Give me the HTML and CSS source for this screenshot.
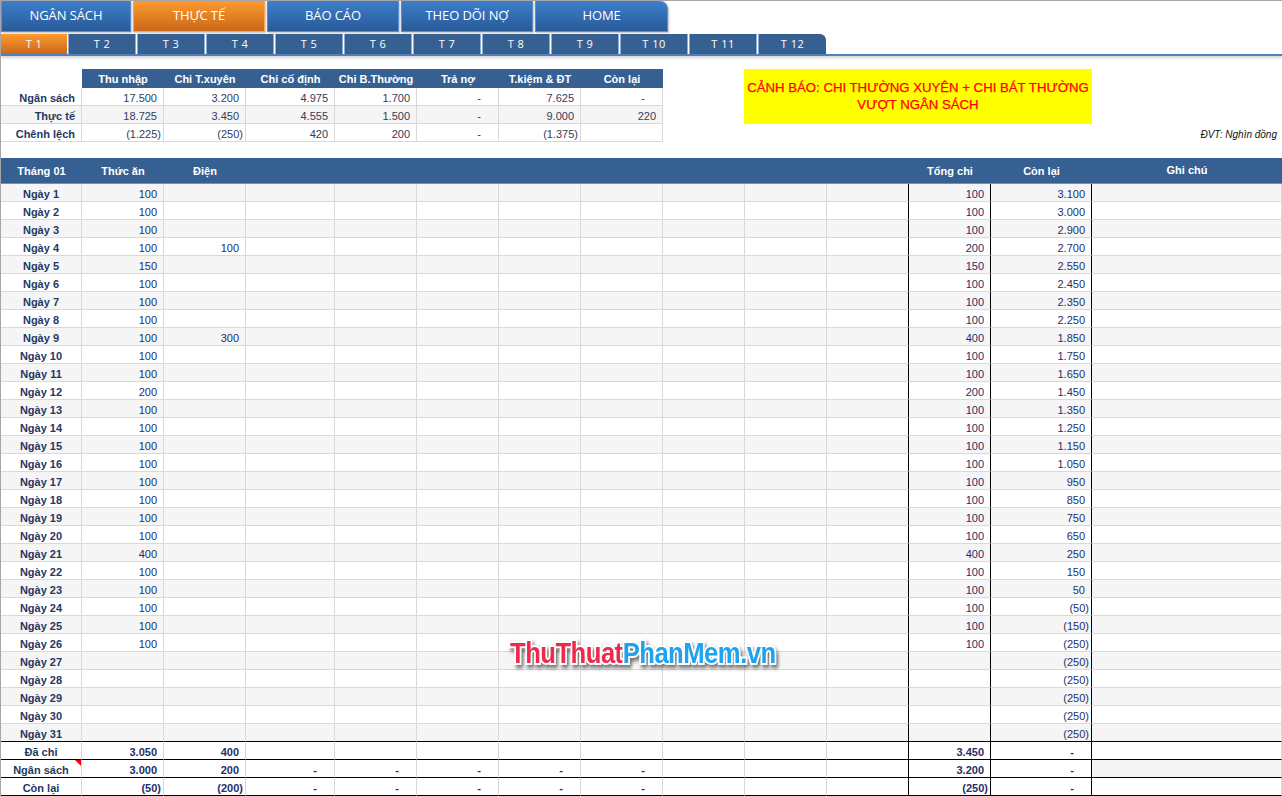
FILE: index.html
```html
<!DOCTYPE html>
<html lang="vi">
<head>
    <meta charset="UTF-8">
    <title>Thực tế - T 1</title>
    <link rel="stylesheet" href="styles.css">
</head>
<body>
    <!-- main tabs -->
    <nav class="main-tabs">
        <a class="tab">NGÂN SÁCH</a>
        <a class="tab active">THỰC TẾ</a>
        <a class="tab">BÁO CÁO</a>
        <a class="tab">THEO DÕI NỢ</a>
        <a class="tab">HOME</a>
    </nav>

    <!-- month tabs -->
    <nav class="month-tabs">
        <a class="month active">T 1</a>
        <a class="month">T 2</a>
        <a class="month">T 3</a>
        <a class="month">T 4</a>
        <a class="month">T 5</a>
        <a class="month">T 6</a>
        <a class="month">T 7</a>
        <a class="month">T 8</a>
        <a class="month">T 9</a>
        <a class="month">T 10</a>
        <a class="month">T 11</a>
        <a class="month">T 12</a>
    </nav>

    <!-- summary -->
    <section class="summary">
        <table class="sheet summary-table">
            <colgroup><col class="c-label"><col class="c-std"><col class="c-std"><col class="c-wide"><col class="c-std"><col class="c-std"><col class="c-std"><col class="c-std"></colgroup>
            <thead>
                <tr><th class="blank"></th><th>Thu nhập</th><th>Chi T.xuyên</th><th>Chi cố định</th><th>Chi B.Thường</th><th>Trả nợ</th><th>T.kiệm &amp; ĐT</th><th>Còn lại</th></tr>
            </thead>
            <tbody>
                <tr><td class="label right">Ngân sách</td><td>17.500</td><td>3.200</td><td>4.975</td><td>1.700</td><td class="dash">-</td><td>7.625</td><td class="dash">-</td></tr>
                <tr class="shade"><td class="label right">Thực tế</td><td>18.725</td><td>3.450</td><td>4.555</td><td>1.500</td><td class="dash">-</td><td>9.000</td><td>220</td></tr>
                <tr><td class="label right">Chênh lệch</td><td class="neg">(1.225)</td><td class="neg">(250)</td><td>420</td><td>200</td><td class="dash">-</td><td class="neg">(1.375)</td><td></td></tr>
            </tbody>
        </table>
        <div class="side">
            <div class="alert">CẢNH BÁO: CHI THƯỜNG XUYÊN + CHI BÁT THƯỜNG<br>VƯỢT NGÂN SÁCH</div>
            <p class="unit">ĐVT: Nghìn đồng</p>
        </div>
    </section>

    <!-- month detail -->
    <table class="sheet detail-table">
        <colgroup><col class="c-label"><col class="c-std"><col class="c-std"><col class="c-wide"><col class="c-std"><col class="c-std"><col class="c-std"><col class="c-std"><col class="c-std"><col class="c-std"><col class="c-std"><col class="c-std"><col class="c-rest"><col class="c-note"></colgroup>
        <thead>
            <tr><th>Tháng 01</th><th>Thức ăn</th><th>Điện</th><th></th><th></th><th></th><th></th><th></th><th></th><th></th><th></th><th>Tổng chi</th><th>Còn lại</th><th class="note-head">Ghi chú</th></tr>
        </thead>
        <tbody>
            <tr class="shade"><td class="label">Ngày 1</td><td>100</td><td></td><td></td><td></td><td></td><td></td><td></td><td></td><td></td><td></td><td>100</td><td>3.100</td><td></td></tr>
            <tr><td class="label">Ngày 2</td><td>100</td><td></td><td></td><td></td><td></td><td></td><td></td><td></td><td></td><td></td><td>100</td><td>3.000</td><td></td></tr>
            <tr class="shade"><td class="label">Ngày 3</td><td>100</td><td></td><td></td><td></td><td></td><td></td><td></td><td></td><td></td><td></td><td>100</td><td>2.900</td><td></td></tr>
            <tr><td class="label">Ngày 4</td><td>100</td><td>100</td><td></td><td></td><td></td><td></td><td></td><td></td><td></td><td></td><td>200</td><td>2.700</td><td></td></tr>
            <tr class="shade"><td class="label">Ngày 5</td><td>150</td><td></td><td></td><td></td><td></td><td></td><td></td><td></td><td></td><td></td><td>150</td><td>2.550</td><td></td></tr>
            <tr><td class="label">Ngày 6</td><td>100</td><td></td><td></td><td></td><td></td><td></td><td></td><td></td><td></td><td></td><td>100</td><td>2.450</td><td></td></tr>
            <tr class="shade"><td class="label">Ngày 7</td><td>100</td><td></td><td></td><td></td><td></td><td></td><td></td><td></td><td></td><td></td><td>100</td><td>2.350</td><td></td></tr>
            <tr><td class="label">Ngày 8</td><td>100</td><td></td><td></td><td></td><td></td><td></td><td></td><td></td><td></td><td></td><td>100</td><td>2.250</td><td></td></tr>
            <tr class="shade"><td class="label">Ngày 9</td><td>100</td><td>300</td><td></td><td></td><td></td><td></td><td></td><td></td><td></td><td></td><td>400</td><td>1.850</td><td></td></tr>
            <tr><td class="label">Ngày 10</td><td>100</td><td></td><td></td><td></td><td></td><td></td><td></td><td></td><td></td><td></td><td>100</td><td>1.750</td><td></td></tr>
            <tr class="shade"><td class="label">Ngày 11</td><td>100</td><td></td><td></td><td></td><td></td><td></td><td></td><td></td><td></td><td></td><td>100</td><td>1.650</td><td></td></tr>
            <tr><td class="label">Ngày 12</td><td>200</td><td></td><td></td><td></td><td></td><td></td><td></td><td></td><td></td><td></td><td>200</td><td>1.450</td><td></td></tr>
            <tr class="shade"><td class="label">Ngày 13</td><td>100</td><td></td><td></td><td></td><td></td><td></td><td></td><td></td><td></td><td></td><td>100</td><td>1.350</td><td></td></tr>
            <tr><td class="label">Ngày 14</td><td>100</td><td></td><td></td><td></td><td></td><td></td><td></td><td></td><td></td><td></td><td>100</td><td>1.250</td><td></td></tr>
            <tr class="shade"><td class="label">Ngày 15</td><td>100</td><td></td><td></td><td></td><td></td><td></td><td></td><td></td><td></td><td></td><td>100</td><td>1.150</td><td></td></tr>
            <tr><td class="label">Ngày 16</td><td>100</td><td></td><td></td><td></td><td></td><td></td><td></td><td></td><td></td><td></td><td>100</td><td>1.050</td><td></td></tr>
            <tr class="shade"><td class="label">Ngày 17</td><td>100</td><td></td><td></td><td></td><td></td><td></td><td></td><td></td><td></td><td></td><td>100</td><td>950</td><td></td></tr>
            <tr><td class="label">Ngày 18</td><td>100</td><td></td><td></td><td></td><td></td><td></td><td></td><td></td><td></td><td></td><td>100</td><td>850</td><td></td></tr>
            <tr class="shade"><td class="label">Ngày 19</td><td>100</td><td></td><td></td><td></td><td></td><td></td><td></td><td></td><td></td><td></td><td>100</td><td>750</td><td></td></tr>
            <tr><td class="label">Ngày 20</td><td>100</td><td></td><td></td><td></td><td></td><td></td><td></td><td></td><td></td><td></td><td>100</td><td>650</td><td></td></tr>
            <tr class="shade"><td class="label">Ngày 21</td><td>400</td><td></td><td></td><td></td><td></td><td></td><td></td><td></td><td></td><td></td><td>400</td><td>250</td><td></td></tr>
            <tr><td class="label">Ngày 22</td><td>100</td><td></td><td></td><td></td><td></td><td></td><td></td><td></td><td></td><td></td><td>100</td><td>150</td><td></td></tr>
            <tr class="shade"><td class="label">Ngày 23</td><td>100</td><td></td><td></td><td></td><td></td><td></td><td></td><td></td><td></td><td></td><td>100</td><td>50</td><td></td></tr>
            <tr><td class="label">Ngày 24</td><td>100</td><td></td><td></td><td></td><td></td><td></td><td></td><td></td><td></td><td></td><td>100</td><td class="neg">(50)</td><td></td></tr>
            <tr class="shade"><td class="label">Ngày 25</td><td>100</td><td></td><td></td><td></td><td></td><td></td><td></td><td></td><td></td><td></td><td>100</td><td class="neg">(150)</td><td></td></tr>
            <tr><td class="label">Ngày 26</td><td>100</td><td></td><td></td><td></td><td></td><td></td><td></td><td></td><td></td><td></td><td>100</td><td class="neg">(250)</td><td></td></tr>
            <tr class="shade"><td class="label">Ngày 27</td><td></td><td></td><td></td><td></td><td></td><td></td><td></td><td></td><td></td><td></td><td></td><td class="neg">(250)</td><td></td></tr>
            <tr><td class="label">Ngày 28</td><td></td><td></td><td></td><td></td><td></td><td></td><td></td><td></td><td></td><td></td><td></td><td class="neg">(250)</td><td></td></tr>
            <tr class="shade"><td class="label">Ngày 29</td><td></td><td></td><td></td><td></td><td></td><td></td><td></td><td></td><td></td><td></td><td></td><td class="neg">(250)</td><td></td></tr>
            <tr><td class="label">Ngày 30</td><td></td><td></td><td></td><td></td><td></td><td></td><td></td><td></td><td></td><td></td><td></td><td class="neg">(250)</td><td></td></tr>
            <tr class="shade last-day"><td class="label">Ngày 31</td><td></td><td></td><td></td><td></td><td></td><td></td><td></td><td></td><td></td><td></td><td></td><td class="neg">(250)</td><td></td></tr>
        </tbody>
        <tfoot>
            <tr><td class="label">Đã chi</td><td>3.050</td><td>400</td><td></td><td></td><td></td><td></td><td></td><td></td><td></td><td></td><td>3.450</td><td class="dash">-</td><td></td></tr>
            <tr><td class="label flagged">Ngân sách</td><td>3.000</td><td>200</td><td class="dash">-</td><td class="dash">-</td><td class="dash">-</td><td class="dash">-</td><td class="dash">-</td><td></td><td></td><td></td><td>3.200</td><td class="dash">-</td><td class="shade-cell"></td></tr>
            <tr><td class="label">Còn lại</td><td class="neg">(50)</td><td class="neg">(200)</td><td class="dash">-</td><td class="dash">-</td><td class="dash">-</td><td class="dash">-</td><td class="dash">-</td><td></td><td></td><td></td><td class="neg">(250)</td><td class="dash">-</td><td></td></tr>
        </tfoot>
    </table>

    <!-- watermark over the sheet -->
    <div class="watermark"><span class="wm-red">ThuThuat</span><span class="wm-blue">PhanMem.vn</span></div>
</body>
</html>
```

FILE: styles.css
```css
body {
    margin: 0;
    position: relative;
    height: 796px;
    overflow: hidden;
    border-top: 1px solid #a6a6a6;
    border-left: 1px solid #a6a6a6;
    box-sizing: border-box;
    background: #fff;
    font-family: "Liberation Sans", Arial, sans-serif;
    font-size: 11px;
    color: #252f6a;
}

/* main tabs */
.main-tabs {
    display: flex;
    gap: 1px;
    height: 31px;
}

.tab {
    width: 132px;
    margin-right: 1px;
    box-sizing: border-box;
    border: 1px solid #5c8ec9;
    border-top: 0;
    background: linear-gradient(#3c7fcb, #295a98);
    box-shadow: 1px 1px 2px rgba(0,0,0,0.25);
    color: #fff;
    font-family: "Open Sans", sans-serif;
    font-size: 13px;
    letter-spacing: -0.1px;
    line-height: 29px;
    text-align: center;
}

.tab:first-child { width: 130px; }

.tab:last-child {
    width: 133px;
    margin-right: 0;
    border-top-right-radius: 8px;
}

.tab.active {
    background: linear-gradient(#ff9a2e, #c9681b);
    border-color: #f0a860;
}

/* month tabs */
.month-tabs {
    display: flex;
    gap: 1px;
    height: 22px;
    margin-top: 2px;
    box-sizing: border-box;
    border-bottom: 2px solid #4f81bd;
    box-shadow: 0 2px 3px rgba(0,0,0,0.18);
}

.month {
    width: 68px;
    height: 20px;
    box-sizing: border-box;
    border: 1px solid #8eaacc;
    border-top: 0;
    border-bottom: 0;
    background: #366092;
    color: #fff;
    font-family: "Open Sans", sans-serif;
    font-size: 11px;
    line-height: 19px;
    letter-spacing: 0.5px;
    text-align: center;
}

.month:first-child {
    width: 66px;
    border: 0;
}

.month:last-child {
    border-top-right-radius: 6px;
    border-right: 0;
}

.month.active {
    background: linear-gradient(#ff9a2e, #c9681b);
}

/* summary block */
.summary {
    display: flex;
    height: 102px;
    box-sizing: border-box;
    padding-top: 13px;
}

.side {
    flex: 1;
    margin-left: 81px;
    padding-right: 5px;
}

.alert {
    width: 348px;
    height: 55px;
    box-sizing: border-box;
    padding-top: 10px;
    background: #ffff00;
    color: #ff0000;
    font-size: 13.2px;
    line-height: 17px;
    text-align: center;
    white-space: nowrap;
    -webkit-text-stroke: 0.25px #ff0000;
}

.unit {
    margin: 4px 0 0;
    color: #111;
    font-size: 10px;
    font-style: italic;
    line-height: 14px;
    text-align: right;
}

/* sheet tables */
.sheet {
    table-layout: fixed;
    border-collapse: separate;
    border-spacing: 0;
}

.summary-table { width: 662px; height: 73px; }
.detail-table { width: 1281px; }

.c-label { width: 81px; }
.c-std { width: 82px; }
.c-wide { width: 89px; }
.c-rest { width: 101px; }
.c-note { width: 190px; }

.sheet th {
    padding: 0;
    background: #366092;
    color: #fff;
    font-weight: bold;
    text-align: center;
}

.sheet th.blank { background: transparent; }

.summary-table th { height: 19px; }

.summary-table td { color: #333c5c; }

.detail-table th {
    height: 24px;
    padding-top: 1px;
    border-bottom: 1px solid #8c8c8c;
    box-sizing: content-box;
}

.detail-table .note-head { padding-top: 0; padding-bottom: 2px; height: 23px; }

.sheet td {
    height: 17px;
    padding: 3px 6px 0 0;
    box-sizing: border-box;
    border-right: 1px solid #d9d9d9;
    border-bottom: 1px solid #d9d9d9;
    line-height: 14px;
    text-align: right;
    white-space: nowrap;
}

.sheet tbody td,
.sheet tfoot td { height: 18px; }

.sheet .shade td,
.sheet .shade-cell { background: #f5f5f5; }

.sheet .label {
    padding-right: 0;
    color: #1f3864;
    font-weight: bold;
    text-align: center;
}

.sheet .label.right {
    padding-right: 6px;
    text-align: right;
}

.sheet .neg { padding-right: 2px; }
.sheet .dash { padding-right: 17px; }

.detail-table td:nth-child(11),
.detail-table td:nth-child(12),
.detail-table td:nth-child(13) { border-right-color: #000; }

.detail-table .last-day td,
.detail-table tfoot td { border-bottom-color: #000; }

.detail-table tfoot td { font-weight: bold; }

/* red comment mark */
.flagged { position: relative; }

.flagged::after {
    content: "";
    position: absolute;
    top: 0;
    right: 0;
    border-top: 6px solid #ff0000;
    border-left: 6px solid transparent;
}

/* watermark */
.watermark {
    position: absolute;
    left: 509px;
    top: 635px;
    font-size: 29px;
    font-weight: bold;
    line-height: 34px;
    letter-spacing: -0.6px;
    white-space: nowrap;
    -webkit-text-stroke: 4px #fff;
    paint-order: stroke fill;
    filter: drop-shadow(2px 3px 2px rgba(0,0,0,0.55));
    transform: scaleX(0.885);
    transform-origin: left center;
}

.wm-red { color: #ee2a4c; }
.wm-blue { color: #1ea3f0; }
```
